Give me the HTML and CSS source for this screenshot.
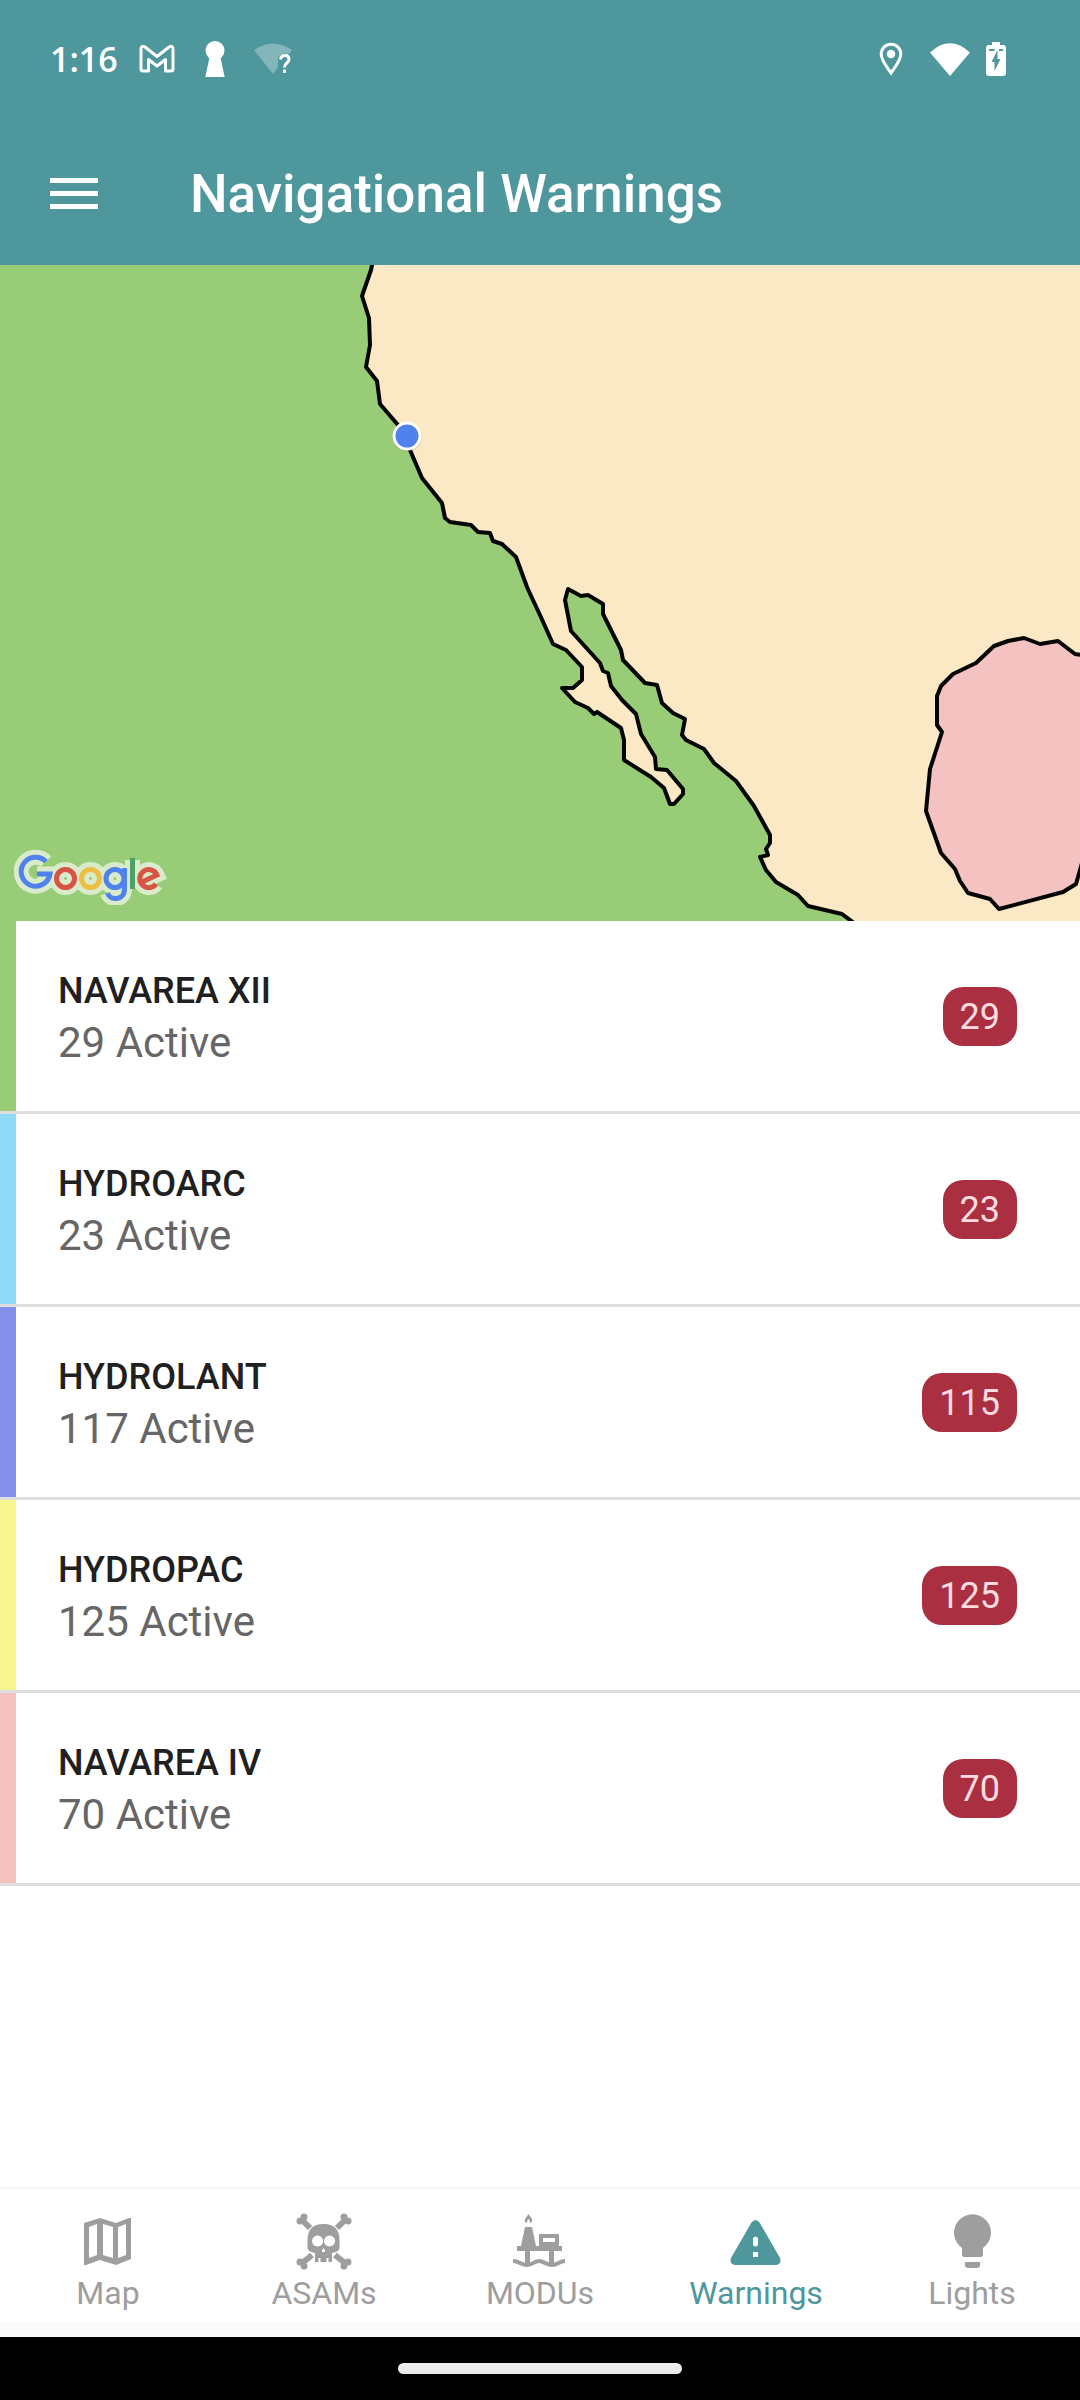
FILE: index.html
```html
<!DOCTYPE html>
<html lang="en">
<head>
<meta charset="utf-8">
<meta name="viewport" content="width=device-width, initial-scale=1">
<title>Navigational Warnings</title>
<link rel="stylesheet" href="styles.css">
</head>
<body>
<div class="app">
  <header class="header">
    <div class="status">
      <span class="clock">1:16</span>
      <svg class="status-mail" viewBox="0 0 36 28" width="36" height="28" aria-hidden="true"><path d="M2 4.500Q2 0 6 2L18 11.500L30 2Q34 0 34 4.500V24Q34 26 32 26H26.500V14.500L18 21L9.500 14.500V26H4Q2 26 2 24Z" fill="none" stroke="#fff" stroke-width="3" stroke-linejoin="round"/></svg>
      <svg class="status-key" viewBox="0 0 20 36" width="20" height="36" aria-hidden="true"><circle cx="10" cy="9.500" r="9.500" fill="#fff"/><path d="M5 14H15L19.700 36H.3Z" fill="#fff"/></svg>
      <svg class="status-weak" viewBox="0 0 40 32" width="40" height="32" aria-hidden="true"><path d="M1 7Q20-6 39 7L36 11Q28 9 25 15V24L20 31Z" fill="#fff" opacity=".3"/><path d="M27.500 16.500Q28 12.500 32 12.500T36 16.500C36 19.500 31.500 20 31.500 24.500M31.500 26.500V30" fill="none" stroke="#fff" stroke-width="3"/></svg>
      <span class="grow"></span>
      <svg class="status-pin" viewBox="0 0 24 34" width="24" height="34" aria-hidden="true"><path d="M12 31C8 25 2.200 18.500 2.200 12A9.800 9.800 0 0 1 21.800 12C21.800 18.500 16 25 12 31Z" fill="none" stroke="#fff" stroke-width="3"/><circle cx="12" cy="12" r="4.300" fill="#fff"/></svg>
      <svg class="status-wifi" viewBox="0 0 40 33" width="40" height="33" aria-hidden="true"><path d="M0 9.500Q20-9 40 9.500L20 33Z" fill="#fff"/></svg>
      <svg class="status-battery" viewBox="0 0 20 34" width="20" height="34" aria-hidden="true"><path d="M6 0H14V3H17Q20 3 20 6V31Q20 34 17 34H3Q0 34 0 31V6Q0 3 3 3H6Z" fill="#fff"/><path d="M11.500 8V17H14.500L8.500 29V20H5.500Z M3 7H9L8 9H3Z M13 7H17V9H13Z" fill="#4d979d"/></svg>
    </div>
    <div class="toolbar">
      <button class="menu" type="button" aria-label="Open menu"><svg viewBox="0 0 48 32" width="48" height="32" aria-hidden="true"><path d="M0 0H48V5H0ZM0 13H48V18H0ZM0 26H48V31H0Z" fill="#fff"/></svg></button>
      <h1 class="title">Navigational Warnings</h1>
    </div>
  </header>

  <section class="map" aria-label="Map">
    <svg class="map-art" viewBox="0 265 1080 656" preserveAspectRatio="xMidYMid slice" aria-hidden="true">
      <rect x="-600" y="265" width="2280" height="656" fill="#fbe9c5"/>
      <path d="M373 260L371 270L362 296L369 318L370 345L366 367L377 381L380 404L398 425L407 443L422 478L442 503L445 518L450 522L471 525L478 532L490 533L493 541L502 544L516 557L527 587L532 598L540 615L553 644L566 650L582 667V680L573 688H562L575 702L588 708L594 714L597 712L621 728L624 740V760L651 777L664 788L670 804H674L683 794V789L667 770L656 769L655 757L641 734L636 714L622 700L611 686L608 673L603 671L600 663L571 631L565 600L568 589L581 596L588 595L603 604V614L621 650L623 660L645 683L657 685L662 703L673 713L685 719L682 735L686 740L704 749L714 763L736 781L754 806L770 835V843L766 849L768 855L760 857L766 870L776 882L798 895L808 906L842 914L858 926H-600V260Z" fill="#98cc76" stroke="#050505" stroke-width="4" stroke-linejoin="round"/>
      <path d="M1090 656L1075 654L1058 641L1040 644L1024 638L1008 641L994 646L976 663L953 674L941 686L937 696V725L942 732L930 769L926 811L941 853L955 869L960 881L968 893L990 899L999 909L1063 892L1076 884L1090 835Z" fill="#f4c2c1" stroke="#050505" stroke-width="4" stroke-linejoin="round"/>
      <circle cx="407" cy="437" r="15" fill="#776b4c" opacity=".18"/>
      <circle cx="407" cy="436" r="13" fill="#4f82ec" stroke="#fff" stroke-width="3"/>
    </svg>
    <svg class="google" viewBox="0 0 154 58" width="154" height="58" role="img" aria-label="Google">
      <defs><g id="google-mark" fill="none">
        <path d="M32 14.500A14.500 14.500 0 1 0 36 27H23" stroke="#4f82ec"/>
        <circle cx="51.500" cy="31.500" r="9" stroke="#d75445"/>
        <circle cx="76.500" cy="31.500" r="9" stroke="#edbf42"/>
        <path d="M110 31.500A9 9 0 1 1 92 31.500A9 9 0 0 1 110 31.500ZM110.500 21V42C110.500 54 96 54 93.500 46" stroke="#4f82ec"/>
        <path d="M118.500 11V42" stroke="#4da164"/>
        <path d="M128 35L143 28A9 9 0 1 0 142 37" stroke="#d75445"/>
      </g></defs>
      <path d="M32 14.500A14.500 14.500 0 1 0 36 27H23M51.500 22.500A9 9 0 1 0 51.600 22.500M76.500 22.500A9 9 0 1 0 76.600 22.500M110 31.500A9 9 0 1 1 92 31.500A9 9 0 0 1 110 31.500ZM110.500 24V42C110.500 54 96 54 93.500 46M118.500 13V40M128 35L143 28A9 9 0 1 0 142 37" fill="none" stroke="#d9ebcb" stroke-width="15"/>
      <use href="#google-mark" stroke-width="5"/>
    </svg>
  </section>

  <main class="content">
    <ul class="areas">
      <li class="area area-xii"><div class="area-text"><h2 class="name">NAVAREA XII</h2><p class="active">29 Active</p></div><span class="badge">29</span></li>
      <li class="area area-arc"><div class="area-text"><h2 class="name">HYDROARC</h2><p class="active">23 Active</p></div><span class="badge">23</span></li>
      <li class="area area-lant"><div class="area-text"><h2 class="name">HYDROLANT</h2><p class="active">117 Active</p></div><span class="badge">115</span></li>
      <li class="area area-pac"><div class="area-text"><h2 class="name">HYDROPAC</h2><p class="active">125 Active</p></div><span class="badge">125</span></li>
      <li class="area area-iv"><div class="area-text"><h2 class="name">NAVAREA IV</h2><p class="active">70 Active</p></div><span class="badge">70</span></li>
    </ul>
  </main>

  <nav class="tabs" aria-label="Sections">
    <a class="tab" href="#map"><svg viewBox="0 0 64 64" width="64" height="64" aria-hidden="true"><path fill-rule="evenodd" d="M8 14L24 9L40 14L53 9H55V50L40 56L24 51L10 56H8ZM13 18V49L21 46V15ZM27 15V46L37 49V18ZM42 18V49L50 46V15Z"/></svg><span>Map</span></a>
    <a class="tab" href="#asams"><svg viewBox="0 0 64 64" width="64" height="64" aria-hidden="true"><path d="M9 10L18 19M54 10L45 19M9 55L20 46M54 55L43 46" stroke="currentColor" stroke-width="6"/><circle cx="12" cy="8" r="3.500"/><circle cx="8" cy="12" r="3.500"/><circle cx="52" cy="8" r="3.500"/><circle cx="56" cy="12" r="3.500"/><circle cx="8" cy="53" r="3.500"/><circle cx="12" cy="57" r="3.500"/><circle cx="56" cy="53" r="3.500"/><circle cx="52" cy="57" r="3.500"/><path fill-rule="evenodd" d="M15.500 31Q15.500 15 31.500 15T47.500 31V39Q47 43 40 44V53H36.500V49H34.500V53H28.500V49H26.500V53H23V44Q16 43 15.500 39ZM25.500 26.500A5.500 5.500 0 1 0 25.600 26.500ZM37.500 26.500A5.500 5.500 0 1 0 37.600 26.500ZM31.500 39Q29.500 41 30 43H33Q33.500 41 31.500 39Z"/></svg><span>ASAMs</span></a>
    <a class="tab" href="#modus"><svg viewBox="0 0 64 64" width="64" height="64" aria-hidden="true"><path fill-rule="evenodd" d="M20.500 5L24 10Q25 13 22 14Q22 11 20.500 10Q19 11 19 14Q16 13 17 10ZM17 18H24L28 37H31V25H51V37H54V42H46V54H41V42H22V54H17V42H9V37H13ZM35 29V33H47V29Z"/><path d="M5 52C11 52 13 56 19 56S26 52 31 52S38 56 44 56S51 52 57 52" fill="none" stroke="currentColor" stroke-width="4"/></svg><span>MODUs</span></a>
    <a class="tab tab-on" href="#warnings" aria-current="page"><svg viewBox="0 0 64 64" width="64" height="64" aria-hidden="true"><path fill-rule="evenodd" d="M27.500 13.500Q31.500 8.500 35.500 13.500L56 49Q58 55 52 56H11Q5 55 7 49ZM29 29V36Q31.500 39 34 36V29Q31.500 26 29 29ZM29 43V48H34V43Z"/></svg><span>Warnings</span></a>
    <a class="tab" href="#lights"><svg viewBox="0 0 64 64" width="64" height="64" aria-hidden="true"><path d="M22 39A18.500 18.500 0 1 1 43 39V46Q43 48 41 48H24Q22 48 22 46ZM25 53H40V56Q40 59 37 59H28Q25 59 25 56Z"/></svg><span>Lights</span></a>
  </nav>
  <div class="gesture"><div class="pill"></div></div>
</div>
</body>
</html>
```
FILE: styles.css
```css
* { box-sizing: border-box; }
body { margin: 0; background: #fff; font-family: Roboto, sans-serif; }
h1, h2, p, ul { margin: 0; padding: 0; font-weight: 400; }
svg { display: block; flex: none; }
.app { min-height: 100vh; display: flex; flex-direction: column; }

.header { background: #4d979d; color: #fff; }
.status { display: flex; align-items: center; height: 118px; padding: 0 74px 0 50px; }
.clock { font: 600 34px/40px "Open Sans", sans-serif; }
.status-mail { margin-left: 21px; }
.status-key { margin-left: 30px; }
.status-weak { margin-left: 28px; }
.grow { flex: 1; }
.status-wifi { margin-left: 27px; }
.status-battery { margin-left: 16px; }
.toolbar { display: flex; align-items: center; height: 147px; padding: 4px 50px 0; }
.menu { display: block; padding: 0; border: 0; background: none; }
.title { margin-left: 92px; font-size: 53px; line-height: 64px; font-weight: 500; }

.map { position: relative; height: 656px; overflow: hidden; background: #fbe9c5; }
.map-art { width: 100%; height: 100%; }
.google { position: absolute; left: 14px; bottom: 16px; }

.content { flex: 1; }
.areas { list-style: none; }
.area { display: flex; align-items: center; justify-content: space-between; position: relative; height: 193px; padding: 0 63px 0 58px; border-bottom: 3px solid #dedede; }
.area::before { content: ""; position: absolute; left: 0; top: 0; bottom: 0; width: 16px; background: var(--area); }
.area-xii { --area: #98cc76; }
.area-arc { --area: #90dbf7; }
.area-lant { --area: #8490e9; }
.area-pac { --area: #f6f590; }
.area-iv { --area: #f4c2c1; }
.area-text { padding-top: 5px; }
.name { font-size: 36px; line-height: 48px; font-weight: 500; color: #202020; }
.active { font-size: 42px; line-height: 56px; color: #666; }
.badge { padding: 2px 17px 0; border-radius: 20px; background: #aa2f40; color: #ffdce0; font-size: 36px; line-height: 57px; }

.tabs { display: flex; height: 150px; border-top: 2px solid #f7f7f7; background: linear-gradient(#fff 134px, #fafafa 134px); }
.tab { flex: 1; display: flex; flex-direction: column; align-items: center; padding-top: 20px; color: #9e9e9e; font-size: 32px; line-height: 40px; text-decoration: none; }
.tab svg { fill: currentColor; }
.tab-on { color: #4d979d; }
.gesture { display: flex; align-items: center; justify-content: center; height: 63px; background: #000; }
.pill { width: 284px; height: 11px; border-radius: 6px; background: #ebebeb; }
```
